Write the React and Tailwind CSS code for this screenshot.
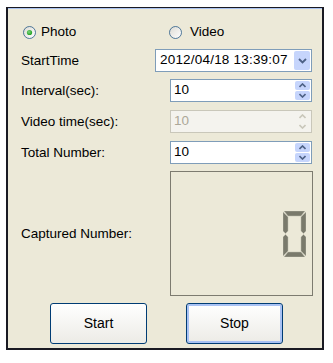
import React from "react";

function Radio({ checked }) {
  return (
    <svg width="13" height="13" viewBox="0 0 13 13">
      <defs>
        <linearGradient id={checked ? "rg1" : "rg2"} x1="0" y1="0" x2="1" y2="1">
          <stop offset="0" stopColor="#dcdbd3" />
          <stop offset="1" stopColor="#ffffff" />
        </linearGradient>
        <radialGradient id="dot" cx="0.4" cy="0.4" r="0.6">
          <stop offset="0" stopColor="#7ed67e" />
          <stop offset="1" stopColor="#21a121" />
        </radialGradient>
      </defs>
      <circle cx="6.5" cy="6.5" r="6" fill={`url(#${checked ? "rg1" : "rg2"})`} stroke="#1c5180" strokeWidth="1" strokeOpacity="0.75" />
      {checked && <circle cx="6.5" cy="6.5" r="2.6" fill="url(#dot)" />}
    </svg>
  );
}

function Spinner({ disabled }) {
  const bg = disabled ? "bg-[#f4f3ee]" : "bg-[#c6d5fc]";
  const col = disabled ? "#c9c7ba" : "#4d6185";
  return (
    <div className="flex flex-col w-[16px] h-full py-[1px] pr-[1px] gap-[1px]">
      <div className={`flex-1 flex items-center justify-center rounded-[2px] ${bg}`}>
        <svg width="7" height="5" viewBox="0 0 7 5">
          <path d="M0.5 4 L3.5 1 L6.5 4" fill="none" stroke={col} strokeWidth="1.6" />
        </svg>
      </div>
      <div className={`flex-1 flex items-center justify-center rounded-[2px] ${bg}`}>
        <svg width="7" height="5" viewBox="0 0 7 5">
          <path d="M0.5 1 L3.5 4 L6.5 1" fill="none" stroke={col} strokeWidth="1.6" />
        </svg>
      </div>
    </div>
  );
}

function SpinBox({ value, disabled }) {
  return (
    <div
      className={`w-[142px] h-[23px] flex items-stretch border ${
        disabled ? "border-[#c9c7ba] bg-[#f4f3ee] text-[#aca899]" : "border-[#7f9db9] bg-white text-black"
      }`}
    >
      <div className="flex-1 flex items-center pl-[3px] text-[13.5px]">{value}</div>
      <Spinner disabled={disabled} />
    </div>
  );
}

function Digit() {
  return (
    <svg width="23" height="46" viewBox="0 0 23 46">
      <g fill="#7a7a6c" stroke="#bdbcae" strokeWidth="0.5">
        <path d="M1 0 L22 0 L18 5 L5 5 Z" />
        <path d="M0 1 L5 6 L5 20 L2.5 22.5 L0 20 Z" />
        <path d="M23 1 L23 20 L20.5 22.5 L18 20 L18 6 Z" />
        <path d="M0 26 L2.5 23.5 L5 26 L5 40 L0 45 Z" />
        <path d="M23 26 L23 45 L18 40 L18 26 L20.5 23.5 Z" />
        <path d="M1 46 L5 41 L18 41 L22 46 Z" />
      </g>
    </svg>
  );
}

function Label({ children }) {
  return <div className="text-[13.5px] text-black leading-none">{children}</div>;
}

export default function App() {
  return (
    <div
      className="w-[333px] h-[363px] bg-white pt-[7px] pl-[6px]"
      style={{ fontFamily: '"Liberation Sans", Arial, sans-serif' }}
    >
      <div className="w-[318px] h-[343px] border-x-2 border-b-2 border-t border-[#1a1a22] bg-[#ece9d8] flex flex-col">
        <div className="h-[1px] bg-[#a9c2f0]" />
        <div className="flex flex-col pl-[13px] pr-[10px] pt-[16px]">
          {/* radio row */}
          <div className="h-[14px] flex items-center">
            <div className="flex items-center w-[148px] pl-[2px]">
              <Radio checked />
              <span className="ml-[5px] text-[13.5px]">Photo</span>
            </div>
            <div className="flex items-center">
              <Radio />
              <span className="ml-[8px] text-[13.5px]">Video</span>
            </div>
          </div>

          {/* StartTime */}
          <div className="mt-[10px] h-[23px] flex items-center justify-between">
            <Label>StartTime</Label>
            <div className="w-[157px] h-[23px] border border-[#7f9db9] bg-white flex items-stretch">
              <div className="flex-1 flex items-center pl-[4px] text-[13.5px] tracking-[0.2px]">
                2012/04/18 13:39:07
              </div>
              <div className="w-[16px] my-[1px] mr-[1px] rounded-[2px] bg-[#c6d5fc] flex items-center justify-center">
                <svg width="9" height="6" viewBox="0 0 9 6">
                  <path d="M1 1 L4.5 4.5 L8 1" fill="none" stroke="#4d6185" strokeWidth="1.8" />
                </svg>
              </div>
            </div>
          </div>

          {/* Interval */}
          <div className="mt-[7px] h-[23px] flex items-center justify-between">
            <Label>Interval(sec):</Label>
            <SpinBox value="10" />
          </div>

          {/* Video time */}
          <div className="mt-[8px] h-[23px] flex items-center justify-between">
            <Label>Video time(sec):</Label>
            <SpinBox value="10" disabled />
          </div>

          {/* Total Number */}
          <div className="mt-[8px] h-[23px] flex items-center justify-between">
            <Label>Total Number:</Label>
            <SpinBox value="10" />
          </div>

          {/* Captured */}
          <div className="mt-[7px] h-[125px] flex items-center justify-between">
            <Label>Captured Number:</Label>
            <div className="w-[143px] h-[125px] border border-[#7d7b70] -mr-[1px] flex items-center justify-end pr-[6px]">
              <Digit />
            </div>
          </div>

          {/* Buttons */}
          <div className="mt-[7px] flex pl-[29px] gap-[39px]">
            <button className="w-[97px] h-[41px] rounded-[3px] border border-[#003c74] bg-gradient-to-b from-white to-[#ecebe6] text-[14px] text-black">
              Start
            </button>
            <button className="w-[97px] h-[41px] rounded-[3px] border border-[#003c74] bg-gradient-to-b from-white to-[#ecebe6] text-[14px] text-black shadow-[inset_0_0_0_2px_#a9c2f4]">
              Stop
            </button>
          </div>
        </div>
      </div>
    </div>
  );
}
